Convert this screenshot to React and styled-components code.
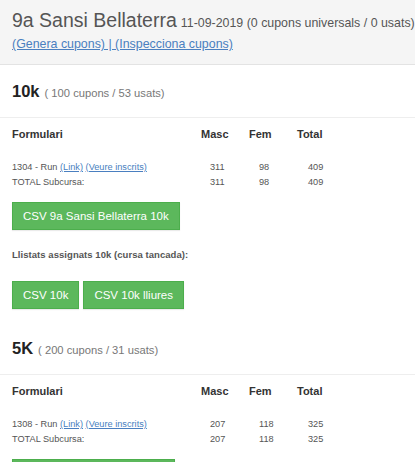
import React from "react";
import styled, { createGlobalStyle } from "styled-components";

const Global = createGlobalStyle`
  html, body { margin: 0; padding: 0; background: #fff; }
  body { font-family: "Liberation Sans", Arial, sans-serif; color: #333; }
`;

const Page = styled.div`
  width: 415px;
  overflow: hidden;
`;

const Header = styled.header`
  background: #f5f5f5;
  border-bottom: 1px solid #e3e3e3;
  padding: 8px 12px 12px;
  height: 44px;
`;

const TitleRow = styled.div`
  display: flex;
  align-items: baseline;
  gap: 4px;
  height: 24px;
  line-height: 24px;
  white-space: nowrap;
`;

const RaceName = styled.span`
  font-size: 19.5px;
  color: #555;
`;

const Meta = styled.span`
  font-size: 12.4px;
  color: #555;
`;

const LinkRow = styled.div`
  margin-top: 4px;
  font-size: 12.4px;
  line-height: 16px;
  color: #4a7fc0;
`;

const Link = styled.a`
  color: #4a7fc0;
  text-decoration: underline;
  cursor: pointer;
`;

const SectionHead = styled.div`
  height: 52px;
  display: flex;
  align-items: center;
  gap: 5px;
  padding-left: 12px;
  border-bottom: 1px solid #eeeeee;
  margin-top: ${p => p.$top || 0}px;
`;

const Distance = styled.span`
  font-size: 16.5px;
  font-weight: bold;
  color: #222;
`;

const Counts = styled.span`
  font-size: 11.2px;
  color: #777;
  margin-top: 3px;
`;

const Table = styled.div`
  display: grid;
  grid-template-columns: 189px 48px 48px 40px;
  padding-left: 12px;
`;

const HeadCell = styled.div`
  height: 32px;
  line-height: 32px;
  font-size: 11px;
  font-weight: bold;
  color: #333;
  margin-bottom: 10px;
`;

const Cell = styled.div`
  height: 15px;
  line-height: 15px;
  font-size: 9.2px;
  color: #555;
  white-space: nowrap;
  padding-left: ${p => p.$shift || 0}px;
`;

const SmallLink = styled.a`
  color: #4a7fc0;
  text-decoration: underline;
  cursor: pointer;
`;

const Button = styled.button`
  font-family: "Liberation Sans", Arial, sans-serif;
  font-size: 11.5px;
  line-height: 16px;
  padding: 5px 10px;
  color: #fff;
  background: #5cb85c;
  border: 1px solid #4cae4c;
  border-radius: 0;
  box-shadow: 0 1px 1px rgba(0, 0, 0, 0.08);
  cursor: pointer;
`;

const Actions = styled.div`
  display: flex;
  gap: 4px;
  padding-left: 12px;
  margin-top: ${p => p.$top}px;
`;

const SubTitle = styled.div`
  padding-left: 12px;
  margin-top: 18px;
  font-size: 9.5px;
  line-height: 14px;
  font-weight: bold;
  color: #555;
  letter-spacing: 0.05px;
`;

const races = [
  {
    name: "10k",
    counts: "( 100 cupons / 53 usats)",
    form: "1304",
    masc: 311,
    fem: 98,
    total: 409,
    csv: "CSV 9a Sansi Bellaterra 10k",
    lists: ["CSV 10k", "CSV 10k lliures"],
  },
  {
    name: "5K",
    counts: "( 200 cupons / 31 usats)",
    form: "1308",
    masc: 207,
    fem: 118,
    total: 325,
    csv: "CSV 9a Sansi Bellaterra 5K",
    lists: [],
  },
];

function RaceSection({ race, first }) {
  return (
    <section>
      <SectionHead $top={first ? 0 : 13}>
        <Distance>{race.name}</Distance>
        <Counts>{race.counts}</Counts>
      </SectionHead>
      <Table>
        <HeadCell>Formulari</HeadCell>
        <HeadCell>Masc</HeadCell>
        <HeadCell>Fem</HeadCell>
        <HeadCell>Total</HeadCell>

        <Cell>
          {race.form} - Run <SmallLink>(Link)</SmallLink>{" "}
          <SmallLink>(Veure inscrits)</SmallLink>
        </Cell>
        <Cell $shift={9}>{race.masc}</Cell>
        <Cell $shift={10}>{race.fem}</Cell>
        <Cell $shift={11}>{race.total}</Cell>

        <Cell>TOTAL Subcursa:</Cell>
        <Cell $shift={9}>{race.masc}</Cell>
        <Cell $shift={10}>{race.fem}</Cell>
        <Cell $shift={11}>{race.total}</Cell>
      </Table>
      <Actions $top={12}>
        <Button>{race.csv}</Button>
      </Actions>
      {race.lists.length > 0 && (
        <>
          <SubTitle>Llistats assignats {race.name} (cursa tancada):</SubTitle>
          <Actions $top={19}>
            {race.lists.map(l => (
              <Button key={l}>{l}</Button>
            ))}
          </Actions>
        </>
      )}
    </section>
  );
}

export default function App() {
  return (
    <Page>
      <Global />
      <Header>
        <TitleRow>
          <RaceName>9a Sansi Bellaterra</RaceName>
          <Meta>11-09-2019 (0 cupons universals / 0 usats)</Meta>
        </TitleRow>
        <LinkRow>
          <Link>(Genera cupons) | (Inspecciona cupons)</Link>
        </LinkRow>
      </Header>
      {races.map((r, i) => (
        <RaceSection key={r.name} race={r} first={i === 0} />
      ))}
    </Page>
  );
}
